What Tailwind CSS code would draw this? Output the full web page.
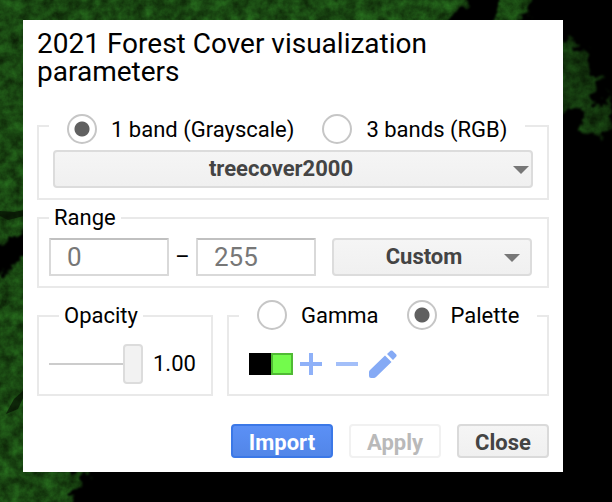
<!DOCTYPE html>
<html lang="en">
<head>
<meta charset="utf-8">
<meta name="viewport" content="width=device-width, initial-scale=1">
<title>Visualization parameters</title>
<script src="https://cdn.jsdelivr.net/npm/@tailwindcss/browser@4"></script>
</head>
<body class="relative min-h-screen overflow-hidden bg-black font-[Roboto,'Liberation_Sans',sans-serif] text-[22px] leading-[24px] text-black">
  <!-- Map imagery behind the dialog -->
  <svg class="absolute inset-0 h-full w-full" viewBox="0 0 612 502" preserveAspectRatio="none" aria-hidden="true">
    <defs>
      <filter id="canopy" x="-40" y="-40" width="692" height="582" filterUnits="userSpaceOnUse" color-interpolation-filters="sRGB">
        <feTurbulence type="fractalNoise" baseFrequency="0.09" numOctaves="4" seed="8" result="raw"/>
        <feColorMatrix in="raw" type="matrix" values="1 0 0 0 0  0 1 0 0 0  0 0 1 0 0  0 0 0 0 1" result="noise"/>
        <feDisplacementMap in="SourceGraphic" in2="noise" scale="24" xChannelSelector="R" yChannelSelector="G" result="shape"/>
        <feGaussianBlur in="shape" stdDeviation="1" result="soft"/>
        <feColorMatrix in="noise" type="matrix" values="0.14 0 0 0 0.03  0.38 0 0 0 0.09  0.12 0 0 0 0.01  0 0 0 0 1" result="green"/>
        <feComposite in="green" in2="soft" operator="in"/>
      </filter>
    </defs>
    <g filter="url(#canopy)">
      <path d="M-40-40H484L464 4 440 30 420 60H70V226L24 232-40 262ZM-40 290 8 270 24 258 70 240V460H24L50 470 88 472 76 488 66 540H-40Z"/>
      <path d="M506-40H542L528 8 508 40 492 40Z"/>
      <path d="M540 36 572 42 590 54 588 74 604 76 592 96 600 108 606 94 612 108 610 128 596 140 580 130 584 106 540 116Z" opacity="0.75"/>
    </g>
    <g fill="#051003">
      <path d="M24 390 14 399 8 410 6 414 18 409 24 396Z" opacity="0.7"/>
      <path d="M0 211 14 212 24 210V216L8 220 0 216Z" opacity="0.7"/>
    </g>
  </svg>

  <main class="relative pt-5 pr-[49px] pb-[30px] pl-[23px]">
    <form class="bg-white px-[14px] pt-[10px] pb-[14px]" onsubmit="return false">
      <h1 class="mb-[22px] text-[28px] leading-[28px]">2021 Forest Cover visualization parameters</h1>

      <fieldset class="min-w-0 border-2 border-[#e9e9e9] px-[10px] pb-[10px]">
        <legend class="flex h-[36px] items-end gap-[28px] px-[18px]">
          <label class="flex items-center gap-[14px] whitespace-nowrap"><input type="radio" name="bands" checked class="size-[30px] shrink-0 appearance-none rounded-full border-2 border-[#c6c6c6] bg-white checked:bg-[radial-gradient(circle,#606060_0_7px,#fff_8px)]"><span class="pt-[2px]">1 band (Grayscale)</span></label>
          <label class="flex items-center gap-[14px] whitespace-nowrap"><input type="radio" name="bands" class="size-[30px] shrink-0 appearance-none rounded-full border-2 border-[#c6c6c6] bg-white checked:bg-[radial-gradient(circle,#606060_0_7px,#fff_8px)]"><span class="pt-[2px]">3 bands (RGB)</span></label>
        </legend>
        <div class="relative mx-1 mt-[6px]">
          <select aria-label="Band" class="block h-[38px] w-full appearance-none rounded-[4px] border-2 border-[#dcdcdc] bg-linear-to-b from-[#f5f5f5] to-[#f0f0f0] pr-6 text-center text-[22px] leading-[24px] font-bold text-[#444] [text-align-last:center]"><option>treecover2000</option></select>
          <svg class="pointer-events-none absolute top-4 right-1 h-2 w-4" viewBox="0 0 16 8" aria-hidden="true"><path d="M0 0H16L8 8Z" fill="#777"/></svg>
        </div>
      </fieldset>

      <fieldset class="mt-[6px] min-w-0 border-2 border-[#e9e9e9] px-[10px] pb-[10px]">
        <legend class="h-[24px] px-[5px]">Range</legend>
        <div class="mt-2 flex items-center">
          <input aria-label="Range minimum" placeholder="0" class="h-[38px] w-[120px] rounded-[1px] border-2 border-[#d9d9d9] border-t-[#c0c0c0] bg-white px-4 text-[26px] leading-[30px] placeholder:text-[#777]">
          <span class="w-[27px] text-center">–</span>
          <input aria-label="Range maximum" placeholder="255" class="h-[38px] w-[120px] rounded-[1px] border-2 border-[#d9d9d9] border-t-[#c0c0c0] bg-white px-4 text-[26px] leading-[30px] placeholder:text-[#777]">
          <div class="relative mr-[5px] ml-4 flex-1">
            <select aria-label="Range preset" class="block h-[38px] w-full appearance-none rounded-[4px] border-2 border-[#dcdcdc] bg-linear-to-b from-[#f5f5f5] to-[#f0f0f0] pr-4 text-center text-[22px] leading-[24px] font-bold text-[#444] [text-align-last:center]"><option>Custom</option></select>
            <svg class="pointer-events-none absolute top-4 right-3 h-2 w-4" viewBox="0 0 16 8" aria-hidden="true"><path d="M0 0H16L8 8Z" fill="#777"/></svg>
          </div>
        </div>
      </fieldset>

      <div class="mt-3 flex gap-[14px]">
        <fieldset class="w-[176px] min-w-0 border-2 border-[#e9e9e9] px-[10px] pb-[10px]">
          <legend class="ml-[10px] flex h-[32px] items-center px-[5px]"><label for="opacity">Opacity</label></legend>
          <div class="mt-3 flex h-[40px] items-center gap-[10px]">
            <input id="opacity" type="range" min="0" max="1" step="0.01" value="1" class="h-[40px] w-[94px] appearance-none bg-transparent [&::-webkit-slider-runnable-track]:h-[2px] [&::-webkit-slider-runnable-track]:bg-[#ccc] [&::-webkit-slider-thumb]:mt-[-19px] [&::-webkit-slider-thumb]:h-[40px] [&::-webkit-slider-thumb]:w-[20px] [&::-webkit-slider-thumb]:appearance-none [&::-webkit-slider-thumb]:rounded-[4px] [&::-webkit-slider-thumb]:border-2 [&::-webkit-slider-thumb]:border-[#dcdcdc] [&::-webkit-slider-thumb]:bg-[#f2f2f2]">
            <output for="opacity">1.00</output>
          </div>
        </fieldset>

        <fieldset class="min-w-0 flex-1 border-2 border-[#e9e9e9] px-[10px] pb-[10px]">
          <legend class="flex h-[32px] items-start gap-[28px] px-[18px]">
            <label class="flex items-center gap-[14px]"><input type="radio" name="stretch" class="size-[30px] shrink-0 appearance-none rounded-full border-2 border-[#c6c6c6] bg-white checked:bg-[radial-gradient(circle,#606060_0_7px,#fff_8px)]"><span class="pt-[2px]">Gamma</span></label>
            <label class="flex items-center gap-[14px]"><input type="radio" name="stretch" checked class="size-[30px] shrink-0 appearance-none rounded-full border-2 border-[#c6c6c6] bg-white checked:bg-[radial-gradient(circle,#606060_0_7px,#fff_8px)]"><span class="pt-[2px]">Palette</span></label>
          </legend>
          <div class="mt-3 ml-[10px] flex h-[40px] items-center">
            <button type="button" aria-label="Black" class="size-[22px] bg-black"></button>
            <button type="button" aria-label="Green" class="size-[22px] border-2 border-[#50ba34] bg-[#73fb4c]"></button>
            <button type="button" aria-label="Add color" class="flex size-[36px] items-center justify-center"><svg class="size-[24px]" viewBox="0 0 24 24" stroke="#8fb1f8" stroke-width="4"><path d="M1 12H23M12 1V23"/></svg></button>
            <button type="button" aria-label="Remove color" class="flex size-[36px] items-center justify-center"><svg class="size-[24px]" viewBox="0 0 24 24" stroke="#a3bff9" stroke-width="4"><path d="M1 12H23"/></svg></button>
            <button type="button" aria-label="Edit palette" class="flex size-[36px] items-center justify-center"><svg class="size-[28px]" viewBox="0 0 28 28" fill="#85aaf5"><path d="M0 26V22Q0 21 1 20L16 5.500 22.500 12 7 27Q6 28 5 28H2Q0 28 0 26ZM18 4 21.500 .800Q22.500 0 23.500 .800L27.300 4.500Q28 5.500 27.300 6.500L24 10Z"/></svg></button>
          </div>
        </fieldset>
      </div>

      <div class="mt-7 flex justify-end gap-4 text-[22px] leading-[24px] font-bold">
        <button class="h-[34px] w-[102px] rounded-[4px] border-2 border-[#3b78e7] bg-linear-to-b from-[#5b90f6] to-[#5286e8] pt-1 text-white">Import</button>
        <button type="button" disabled class="h-[34px] w-[92px] rounded-[4px] border-2 border-[#f1f1f1] bg-white pt-1 text-[#b9b9b9]">Apply</button>
        <button type="button" class="h-[34px] w-[92px] rounded-[4px] border-2 border-[#dadada] bg-linear-to-b from-[#f5f5f5] to-[#f0f0f0] pt-1 text-[#444]">Close</button>
      </div>
    </form>
  </main>
</body>
</html>
